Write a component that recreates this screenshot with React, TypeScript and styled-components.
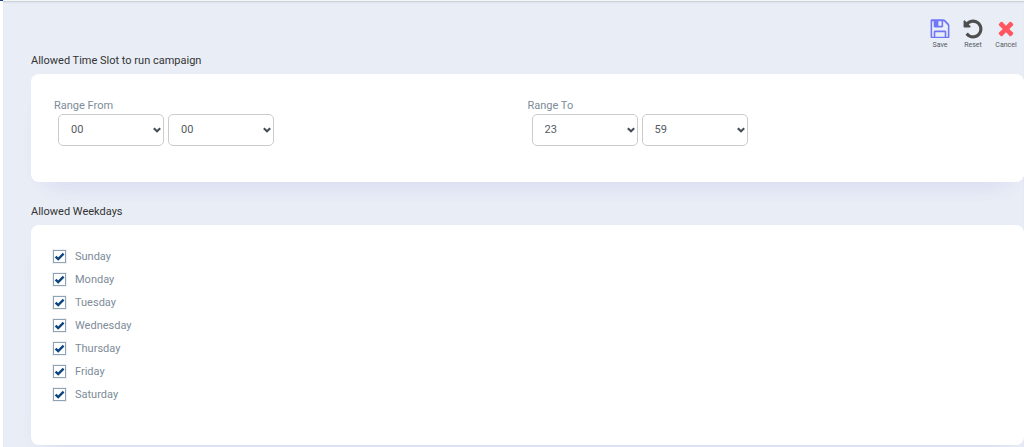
import React from "react";
import styled, { createGlobalStyle } from "styled-components";

const GlobalStyle = createGlobalStyle`
  *, *::before, *::after { box-sizing: border-box; }
  body {
    margin: 0;
    background: #ffffff;
    font-family: Roboto, "Liberation Sans", sans-serif;
    font-size: 11px;
    line-height: 16px;
    color: #3a3a3a;
    overflow: hidden;
  }
`;

const Shell = styled.div`
  display: flex;
  flex-direction: column;
  height: 100vh;
  overflow: hidden;
`;

const TopEdge = styled.div`
  display: flex;
  flex: none;
  height: 1px;
  background: #f4f5f7;
`;

const BrandEdge = styled.div`
  width: 3px;
  background: #0b4380;
`;

const Page = styled.main`
  flex: 1;
  margin-left: 3px;
  padding: 17px 0 0 28px;
  background: #e9eef6;
  box-shadow: inset 0 2px 2px -1px #c3c9d2;
  overflow: hidden;
`;

const Toolbar = styled.div`
  display: flex;
  justify-content: flex-end;
  gap: 9px;
  height: 35px;
  padding-right: 6px;
`;

const ToolButton = styled.button<{ $color: string }>`
  display: flex;
  flex-direction: column;
  align-items: center;
  min-width: 24px;
  height: 32px;
  padding: 0;
  border: 0;
  background: none;
  color: #55595f;
  font: 7px/10px Roboto, "Liberation Sans", sans-serif;
  cursor: pointer;

  svg {
    flex: none;
    width: 22px;
    height: 22px;
    fill: ${(p) => p.$color};
  }
`;

const Section = styled.section`
  margin-bottom: 22px;
`;

const SectionTitle = styled.h2`
  margin: 0 0 5px;
  font-size: 11px;
  line-height: 16px;
  font-weight: 400;
  color: #333333;
`;

const Card = styled.div<{ $padding: string }>`
  padding: ${(p) => p.$padding};
  border-radius: 8px;
  background: #ffffff;
  box-shadow: 0 14px 28px -16px rgba(82, 63, 205, 0.18);
`;

const Ranges = styled.div`
  display: grid;
  grid-template-columns: 1fr 1fr;
`;

const Range = styled.fieldset`
  min-width: 0;
  margin: 0;
  padding: 0;
  border: 0;
`;

const RangeLabel = styled.legend`
  padding: 0;
  color: #7d8b99;
`;

const Selects = styled.div`
  display: flex;
  gap: 4px;
  padding-left: 4px;
`;

const SelectBox = styled.span`
  display: grid;
  align-items: center;
  width: 106px;

  select, svg { grid-area: 1 / 1; }

  svg {
    justify-self: end;
    width: 8px;
    height: 6px;
    margin-right: 3px;
    fill: none;
    stroke: #454c55;
    stroke-width: 2;
    pointer-events: none;
  }
`;

const Select = styled.select`
  appearance: none;
  width: 100%;
  height: 32px;
  padding: 0 16px 0 12px;
  border: 1px solid #cccccc;
  border-radius: 5px;
  background: #ffffff;
  color: #555b62;
  font: 11px/16px Roboto, "Liberation Sans", sans-serif;
`;

const Days = styled.ul`
  display: flex;
  flex-direction: column;
  gap: 7px;
  margin: 0;
  padding: 0;
  list-style: none;
`;

const DayLabel = styled.label`
  display: flex;
  align-items: flex-start;
  gap: 8px;
  height: 16px;
  color: #7d8b99;
`;

const CheckBox = styled.span`
  display: grid;
  width: 15px;
  height: 15px;
  padding: 1px;
  background: #f1f1f1;

  input, svg {
    grid-area: 1 / 1;
    width: 13px;
    height: 13px;
    margin: 0;
  }

  input {
    appearance: none;
    border: 1px solid #8fa3b8;
    background: #ffffff;
  }

  svg {
    fill: none;
    stroke: #0b4380;
    stroke-width: 2.4;
    pointer-events: none;
    visibility: hidden;
  }

  input:checked + svg { visibility: visible; }
`;

const tools = [
  {
    label: "Save",
    color: "#7076f5",
    box: "-128 0 1792 1792",
    path: "M384 1536h768v-384h-768v384zm896 0h128v-896q0-14-10-38.5t-20-34.5l-281-281q-10-10-34-20t-39-10v416q0 40-28 68t-68 28h-576q-40 0-68-28t-28-68v-416h-128v1280h128v-416q0-40 28-68t68-28h832q40 0 68 28t28 68v416zm-384-928v-320q0-13-9.5-22.5t-22.5-9.5h-192q-13 0-22.5 9.5t-9.5 22.5v320q0 13 9.5 22.5t22.5 9.5h192q13 0 22.5-9.5t9.5-22.5zm640 32v896q0 40-28 68t-68 28h-1344q-40 0-68-28t-28-68v-1344q0-40 28-68t68-28h928q40 0 88 20t76 48l280 280q28 28 48 76t20 88z",
  },
  {
    label: "Reset",
    color: "#4d4d4d",
    box: "-128 0 1792 1792",
    path: "M1536 896q0 156-61 298t-164 245-245 164-298 61q-172 0-327-72.5t-264-204.5q-7-10-6.5-22.5t8.5-20.5l137-138q10-9 25-9 16 2 23 12 73 95 179 147t225 52q104 0 198.5-40.5t163.5-109.5 109.5-163.5 40.5-198.5-40.5-198.5-109.5-163.5-163.5-109.5-198.5-40.5q-98 0-188 35.5t-160 101.5l137 138q31 30 14 69-17 40-59 40h-448q-26 0-45-19t-19-45v-448q0-42 40-59 39-17 69 14l130 129q107-101 244.5-156.5t284.5-55.5q156 0 298 61t245 164 164 245 61 298z",
  },
  {
    label: "Cancel",
    color: "#ff5660",
    box: "0 64 1792 1792",
    path: "M1490 1322q0 40-28 68l-136 136q-28 28-68 28t-68-28l-294-294-294 294q-28 28-68 28t-68-28l-136-136q-28-28-28-68t28-68l294-294-294-294q-28-28-28-68t28-68l136-136q28-28 68-28t68 28l294 294 294-294q28-28 68-28t68 28l136 136q28 28 28 68t-28 68l-294 294 294 294q28 28 28 68z",
  },
];

const ranges = [
  { label: "Range From", hour: "00", minute: "00" },
  { label: "Range To", hour: "23", minute: "59" },
];

const weekdays = ["Sunday", "Monday", "Tuesday", "Wednesday", "Thursday", "Friday", "Saturday"];

const numbers = (count: number) => Array.from({ length: count }, (_, n) => String(n).padStart(2, "0"));

function NumberSelect({ label, count, value }: { label: string; count: number; value: string }) {
  return (
    <SelectBox>
      <Select aria-label={label} defaultValue={value}>
        {numbers(count).map((n) => (
          <option key={n}>{n}</option>
        ))}
      </Select>
      <svg viewBox="0 0 8 6" aria-hidden="true">
        <path d="M0.8 1.2 4 4.3 7.2 1.2" />
      </svg>
    </SelectBox>
  );
}

export default function App() {
  return (
    <Shell>
      <GlobalStyle />
      <TopEdge>
        <BrandEdge />
      </TopEdge>
      <Page>
        <Toolbar>
          {tools.map((tool) => (
            <ToolButton key={tool.label} type="button" $color={tool.color}>
              <svg viewBox={tool.box} aria-hidden="true">
                <path d={tool.path} />
              </svg>
              {tool.label}
            </ToolButton>
          ))}
        </Toolbar>
        <Section>
          <SectionTitle>Allowed Time Slot to run campaign</SectionTitle>
          <Card $padding="24px 23px 36px">
            <Ranges>
              {ranges.map((range) => (
                <Range key={range.label}>
                  <RangeLabel>{range.label}</RangeLabel>
                  <Selects>
                    <NumberSelect label={`${range.label} hour`} count={24} value={range.hour} />
                    <NumberSelect label={`${range.label} minute`} count={60} value={range.minute} />
                  </Selects>
                </Range>
              ))}
            </Ranges>
          </Card>
        </Section>
        <Section>
          <SectionTitle>Allowed Weekdays</SectionTitle>
          <Card $padding="24px 21px 42px">
            <Days>
              {weekdays.map((day) => (
                <li key={day}>
                  <DayLabel>
                    <CheckBox>
                      <input type="checkbox" defaultChecked />
                      <svg viewBox="0 0 13 13" aria-hidden="true">
                        <path d="M2.6 6.6 5.2 9.1 10.6 3.7" />
                      </svg>
                    </CheckBox>
                    {day}
                  </DayLabel>
                </li>
              ))}
            </Days>
          </Card>
        </Section>
      </Page>
    </Shell>
  );
}
